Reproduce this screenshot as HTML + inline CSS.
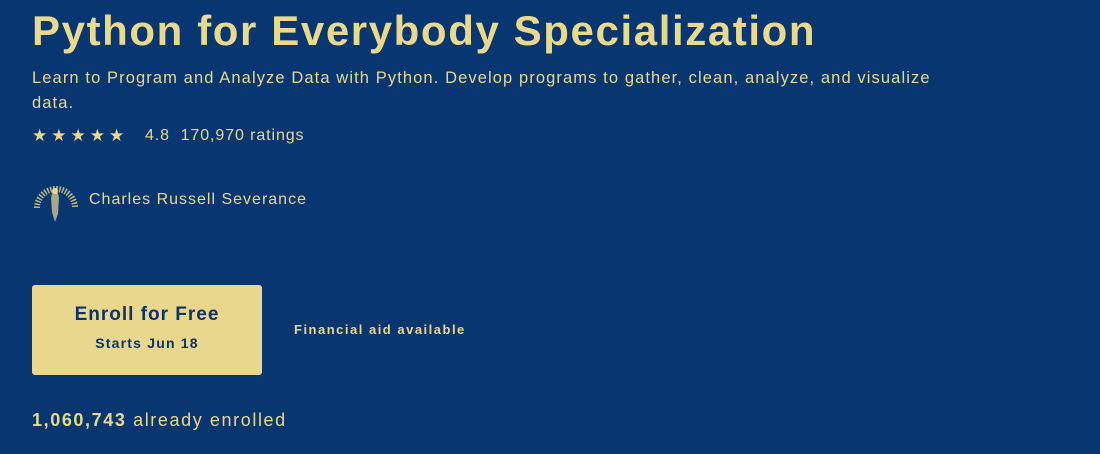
<!DOCTYPE html>
<html><head><meta charset="utf-8"><style>
html,body{margin:0;padding:0;width:1100px;height:454px;background:#083670;overflow:hidden;font-family:"Liberation Sans",sans-serif;color:#e9d98c}
.a{position:absolute;white-space:nowrap}
h1{position:absolute;left:32px;top:7px;margin:0;font-size:42px;font-weight:bold;letter-spacing:1.6px;white-space:nowrap}
.sub{position:absolute;left:32px;top:66px;width:910px;font-size:16.5px;line-height:25px;letter-spacing:1.1px}
.btn{position:absolute;left:32px;top:285px;width:230px;height:90px;background:#e8d78c;border-radius:3px;color:#0c3468;text-align:center;font-weight:bold}
</style></head><body>
<h1>Python for Everybody Specialization</h1>
<div class="sub">Learn to Program and Analyze Data with Python. Develop programs to gather, clean, analyze, and visualize data.</div>
<div class="a" style="left:32px;top:126px;font-size:17px;letter-spacing:4px">★★★★★</div>
<div class="a" style="left:145px;top:127px;font-size:16px;letter-spacing:0.9px">4.8&nbsp; 170,970 ratings</div>
<svg class="a" style="left:33px;top:178px" width="46" height="46" viewBox="0 0 46 46">
<path d="M4 30 A19 19 0 0 1 42 30" fill="none" stroke="#e9d98c" stroke-width="6" stroke-dasharray="1.5 1.5" opacity=".8"/>
<path d="M20 10 L24 10 L26 20 L25 36 L22 44 L19 34 L18 20Z" fill="#e9d98c" opacity=".7"/>
<circle cx="22" cy="13" r="3" fill="#e9d98c"/>
</svg>
<div class="a" style="left:89px;top:191px;font-size:16px;letter-spacing:1px">Charles Russell Severance</div>
<div class="btn"><div style="font-size:19px;margin-top:19px;letter-spacing:1px">Enroll for Free</div><div style="font-size:14px;margin-top:9px;letter-spacing:1.2px">Starts Jun 18</div></div>
<div class="a" style="left:294px;top:322px;font-size:13px;font-weight:bold;letter-spacing:1.5px">Financial aid available</div>
<div class="a" style="left:32px;top:410px;font-size:18px;letter-spacing:1.6px"><b>1,060,743</b> already enrolled</div>
</body></html>
